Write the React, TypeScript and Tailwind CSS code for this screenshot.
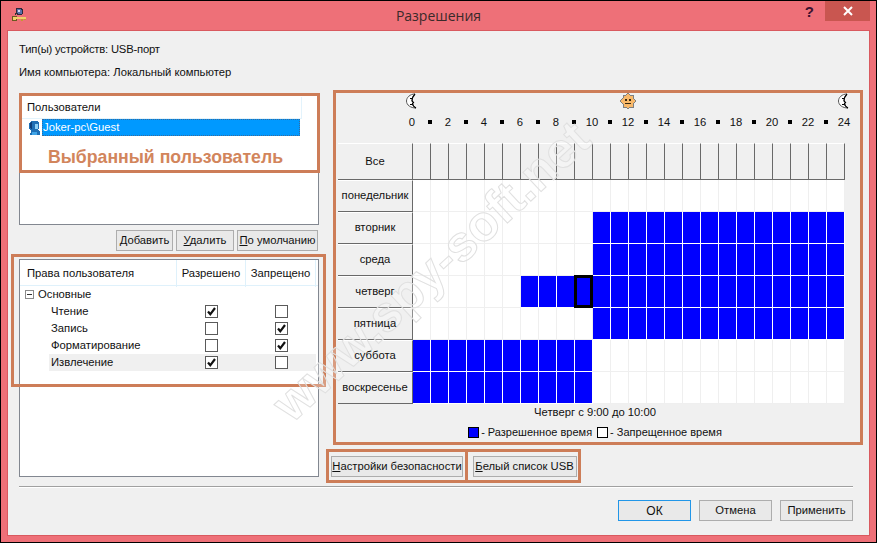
import React from "react";

const font = "font-['Liberation_Sans',sans-serif]";

function Moon() {
  return (
    <svg width="16" height="16" viewBox="0 0 16 16">
      <path d="M11 1 C6 1 2.5 4.5 2.5 8 C2.5 12 6.5 15 12 15 C9.5 13.5 8.5 12 8.5 10.5 L9.5 9.5 L8 8 C8 5.5 9 3 11 1 Z" fill="#fff" stroke="#555" strokeWidth="1" />
      <path d="M11 1 C9 3 8 5.5 8 8 L9.5 9.5 L8.5 10.5 C8.5 12 9.5 13.5 12 15" fill="none" stroke="#000" strokeWidth="1.2" />
      <rect x="6" y="5" width="2" height="1" fill="#000" />
      <rect x="6" y="11" width="2" height="1" fill="#000" />
    </svg>
  );
}

function Sun() {
  return (
    <svg width="16" height="16" viewBox="0 0 16 16" shapeRendering="crispEdges">
      <path d="M8 0 L10 2 L13 2 L13 5 L16 8 L13 11 L13 14 L10 14 L8 16 L6 14 L3 14 L3 11 L0 8 L3 5 L3 2 L6 2 Z" fill="#f9b96a" stroke="#7f7f7f" strokeWidth="1" />
      <rect x="5" y="6" width="2" height="2" fill="#3a2a10" />
      <rect x="9" y="6" width="2" height="2" fill="#3a2a10" />
      <rect x="5" y="10" width="6" height="1" fill="#3a2a10" />
    </svg>
  );
}

function KeyIcon() {
  return (
    <svg width="16" height="16" viewBox="0 0 16 16" className="ml-[10px]" shapeRendering="crispEdges">
      <path d="M5 2 L9 1 L12 3 L11 7 L8 8 L5 6 Z" fill="#5a6ea8" stroke="#2a2a3a" />
      <rect x="7" y="3" width="2" height="2" fill="#d8d8f0" />
      <rect x="1" y="9" width="4" height="4" fill="#f2cf6a" stroke="#6a5a20" />
      <rect x="5" y="10" width="10" height="2" fill="#f2cf6a" />
      <rect x="10" y="12" width="2" height="2" fill="#c49a30" />
      <rect x="13" y="12" width="2" height="1" fill="#c49a30" />
      <path d="M4 8 L6 5" stroke="#333" />
    </svg>
  );
}

function UserIcon() {
  return (
    <svg width="14" height="16" viewBox="0 0 14 16" className="shrink-0" shapeRendering="crispEdges">
      <path d="M5 1 L10 1 L12 3 L12 8 L11 10 L13 12 L13 15 L3 15 L4 11 L2 9 L2 3 Z" fill="#1f6fb5" />
      <path d="M8 4 L11 4 L11 9 L8 9 Z" fill="#8fd0f5" />
      <path d="M3 3 L5 2 L5 9 L3 8 Z" fill="#0f3f7a" />
      <path d="M5 12 L10 12 L10 15 L5 15 Z" fill="#3fa5e8" />
    </svg>
  );
}

function Check({ on }: { on: boolean }) {
  return (
    <div className="w-[13px] h-[13px] border border-[#5a5a5a] bg-white flex items-center justify-center">
      {on && (
        <svg width="11" height="11" viewBox="0 0 11 11">
          <path d="M2 5.5 L4.3 8.3 L9 2" fill="none" stroke="#111" strokeWidth="2.2" />
        </svg>
      )}
    </div>
  );
}

function Btn({ u, rest, w }: { u: string; rest: string; w: string }) {
  return (
    <button className={`${w} h-[21px] shrink-0 border border-[#adadad] bg-[#e9e9e9] text-[11.25px] text-[#111] whitespace-nowrap`}>
      <u>{u}</u>
      {rest}
    </button>
  );
}

const rights = [
  { n: "Чтение", a: true, d: false },
  { n: "Запись", a: false, d: true },
  { n: "Форматирование", a: false, d: true },
  { n: "Извлечение", a: true, d: false },
];

const days: { n: string; blue: (h: number) => boolean }[] = [
  { n: "понедельник", blue: () => false },
  { n: "вторник", blue: (h) => h >= 10 },
  { n: "среда", blue: (h) => h >= 10 },
  { n: "четверг", blue: (h) => h >= 6 },
  { n: "пятница", blue: (h) => h >= 10 },
  { n: "суббота", blue: (h) => h < 10 },
  { n: "воскресенье", blue: (h) => h < 10 },
];

const hours = Array.from({ length: 25 }, (_, i) => i);
const cols = Array.from({ length: 24 }, (_, i) => i);

export default function App() {
  return (
    <div className={`${font} relative w-[877px] h-[543px] overflow-hidden bg-[#ee7078] border border-black flex flex-col text-[11.25px] text-[#111]`}>
      {/* Title bar */}
      <div className="h-[29px] shrink-0 grid grid-cols-[1fr_auto_1fr]">
        <div className="flex items-start pt-[6px]">
          <KeyIcon />
        </div>
        <div className="font-['Open_Sans',sans-serif] text-[14px] text-[#3a2a2a] leading-[30px]">Разрешения</div>
        <div className="flex justify-end items-start pr-[6px]">
          <span className="mr-[11px] mt-[2px] text-[15px] leading-[18px] font-bold text-[#3b1230]">?</span>
          <div className="w-[45px] h-[20px] bg-[#c95650] flex items-center justify-center text-white">
            <svg width="10" height="10" viewBox="0 0 10 10">
              <path d="M1 1 L9 9 M9 1 L1 9" stroke="#fff" strokeWidth="2" />
            </svg>
          </div>
        </div>
      </div>

      {/* Client */}
      <div className="mx-[6px] mb-[6px] flex-1 bg-[#f0f0f0] border border-[#d9595f] pl-[11px] pr-[6px] pt-[11px] flex flex-col">
        <div className="h-[14px] leading-[14px] tracking-[-0.2px]">Тип(ы) устройств: USB-порт</div>
        <div className="h-[14px] leading-[14px] mt-[9px]">Имя компьютера: Локальный компьютер</div>

        <div className="flex mt-[11px] h-[393px]">
          {/* Left column */}
          <div className="w-[300px] shrink-0 pt-[3px] flex flex-col">
            <div className="relative h-[132px] bg-white border border-[#828790]">
              <div className="h-[22px] mt-[3px] mr-[16px] border-b border-r border-[#e3f3fc] pl-[7px] leading-[20px]">Пользователи</div>
              <div className="flex items-center h-[17px] pl-[7px] mr-[18px]">
                <UserIcon />
                <div className="ml-[1px] flex-1 h-[17px] bg-[#0099ff] border border-dotted border-[#3a6a9a] text-white leading-[15px]">Joker-pc\Guest</div>
              </div>
              <div className="absolute -left-[1px] -top-[1px] w-[301px] h-[80px] border-[3px] border-[#cd7d58] flex items-end justify-center pb-[2px]">
                <span className="text-[17.7px] leading-[22px] font-bold text-[#d2855c] -ml-[8px]">Выбранный пользователь</span>
              </div>
            </div>

            <div className="flex justify-end gap-[3px] mt-[5px] mr-[1px]">
              <Btn u="Д" rest="обавить" w="w-[57px]" />
              <Btn u="У" rest="далить" w="w-[58px]" />
              <Btn u="П" rest="о умолчанию" w="w-[81px]" />
            </div>

            <div className="relative mt-[8px] h-[218px] bg-white border border-[#828790]">
              <div className="grid grid-cols-[157px_69px_70px] h-[26px] border-b border-[#dff1fb] leading-[27px]">
                <div className="pl-[7px] border-r border-[#dff1fb]">Права пользователя</div>
                <div className="text-center border-r border-[#dff1fb]">Разрешено</div>
                <div className="text-center border-r border-[#dff1fb]">Запрещено</div>
              </div>
              <div className="h-[17px] flex items-center pl-[5px]">
                <div className="w-[9px] h-[9px] border border-[#8a8a8a] flex items-center justify-center">
                  <div className="w-[5px] h-[1px] bg-[#333]" />
                </div>
                <span className="ml-[4px]">Основные</span>
              </div>
              {rights.map((r, i) => (
                <div key={r.n} className="grid grid-cols-[157px_69px_70px] h-[17px] items-center">
                  <div className={`ml-[29px] h-[17px] pl-[2px] leading-[17px] ${i === 3 ? "bg-[#f0f0f0]" : ""}`}>{r.n}</div>
                  <div className={`h-[17px] flex items-center justify-center ${i === 3 ? "bg-[#f0f0f0]" : ""}`}>
                    <Check on={r.a} />
                  </div>
                  <div className={`h-[17px] flex items-center justify-center ${i === 3 ? "bg-[#f0f0f0]" : ""}`}>
                    <Check on={r.d} />
                  </div>
                </div>
              ))}
              <div className="absolute -left-[9px] -top-[6px] w-[315px] h-[133px] border-[3px] border-[#cd7d58]" />
            </div>
          </div>

          {/* Right column */}
          <div className="ml-[14px] w-[530px] shrink-0 flex flex-col">
            <div className="h-[355px] border-[3px] border-[#cd7d58] flex flex-col">
              <div className="grid grid-cols-[repeat(25,18px)] ml-[67px] h-[16px] justify-items-center">
                <div className="col-start-1"><Moon /></div>
                <div className="col-start-13"><Sun /></div>
                <div className="col-start-25"><Moon /></div>
              </div>
              <div className="grid grid-cols-[repeat(25,18px)] ml-[67px] h-[14px] mt-[6px] justify-items-center items-center leading-[14px]">
                {hours.map((h) =>
                  h % 2 === 0 ? (
                    <span key={h} className="whitespace-nowrap">{h}</span>
                  ) : (
                    <div key={h} className="w-[4px] h-[4px] bg-black" />
                  )
                )}
              </div>
              <div className="ml-[2px] mt-[14px] grid grid-cols-[75px_repeat(24,18px)] w-[507px]">
                <div className="h-[37px] border-r border-b border-[#696969] border-t-white border-t flex items-center justify-center">
                  <span className="relative z-10">Все</span>
                </div>
                {cols.map((c) => (
                  <div key={c} className="h-[37px] border-r border-b border-[#696969] border-t border-t-white" />
                ))}
                {days.map((d, di) => (
                  <React.Fragment key={d.n}>
                    <div className="h-[32px] border-r border-b border-[#696969] border-t border-t-white flex items-center justify-center whitespace-nowrap pb-[2px]">
                      <span className="relative z-10">{d.n}</span>
                    </div>
                    {cols.map((c) => {
                      const b = d.blue(c);
                      return (
                        <div key={c} className={`relative h-[32px] border-r border-b ${b ? "bg-[#0000ff] border-white" : "bg-white border-[#efefef]"}`}>
                          {di === 3 && c === 9 && (
                            <div className="absolute -left-[1px] -top-[1px] w-[19px] h-[33px] border-[3px] border-black" />
                          )}
                        </div>
                      );
                    })}
                  </React.Fragment>
                ))}
              </div>
              <div className="h-[16px] leading-[16px] text-center pr-[6px]">Четверг с 9:00 до 10:00</div>
              <div className="h-[16px] mt-[4px] flex items-center justify-center pr-[6px] text-[11px]">
                <div className="w-[11px] h-[11px] bg-[#0000ff] border border-black" />
                <span className="ml-[2px]">- Разрешенное время</span>
                <div className="ml-[5px] w-[11px] h-[11px] bg-white border border-black" />
                <span className="ml-[2px]">- Запрещенное время</span>
              </div>
            </div>
            <div className="flex -ml-[7px] mt-[4px]">
              <div className="w-[142px] h-[34px] border-[3px] border-[#cd7d58] flex items-center justify-center">
                <Btn u="Н" rest="астройки безопасности" w="w-[132px]" />
              </div>
              <div className="w-[113px] h-[34px] border-[3px] border-[#cd7d58] border-l-0 flex items-center justify-center pl-[3px]">
                <Btn u="Б" rest="елый список USB" w="w-[104px]" />
              </div>
            </div>
          </div>
        </div>

        <div className="mt-[3px] mr-[10px] h-[2px] border-t border-[#a0a0a0] bg-white" />
        <div className="flex justify-end gap-[8px] mt-[12px] mr-[10px]">
          <button className="w-[73px] h-[21px] border border-[#2196e8] bg-[#e9e9e9] text-[12px]">ОК</button>
          <button className="w-[73px] h-[21px] border border-[#adadad] bg-[#e9e9e9] text-[11.25px]">Отмена</button>
          <button className="w-[73px] h-[21px] border border-[#adadad] bg-[#e9e9e9] text-[11.25px]">Применить</button>
        </div>
      </div>

      {/* Watermark */}
      <div className="absolute left-[430px] top-[270px] w-0 h-0 pointer-events-none flex items-center justify-center">
        <span className="shrink-0 -rotate-[43deg] text-[50px] font-bold leading-none whitespace-nowrap text-white/25 [-webkit-text-stroke:1px_#e0e0e0]">www.spy-soft.net</span>
      </div>
    </div>
  );
}
